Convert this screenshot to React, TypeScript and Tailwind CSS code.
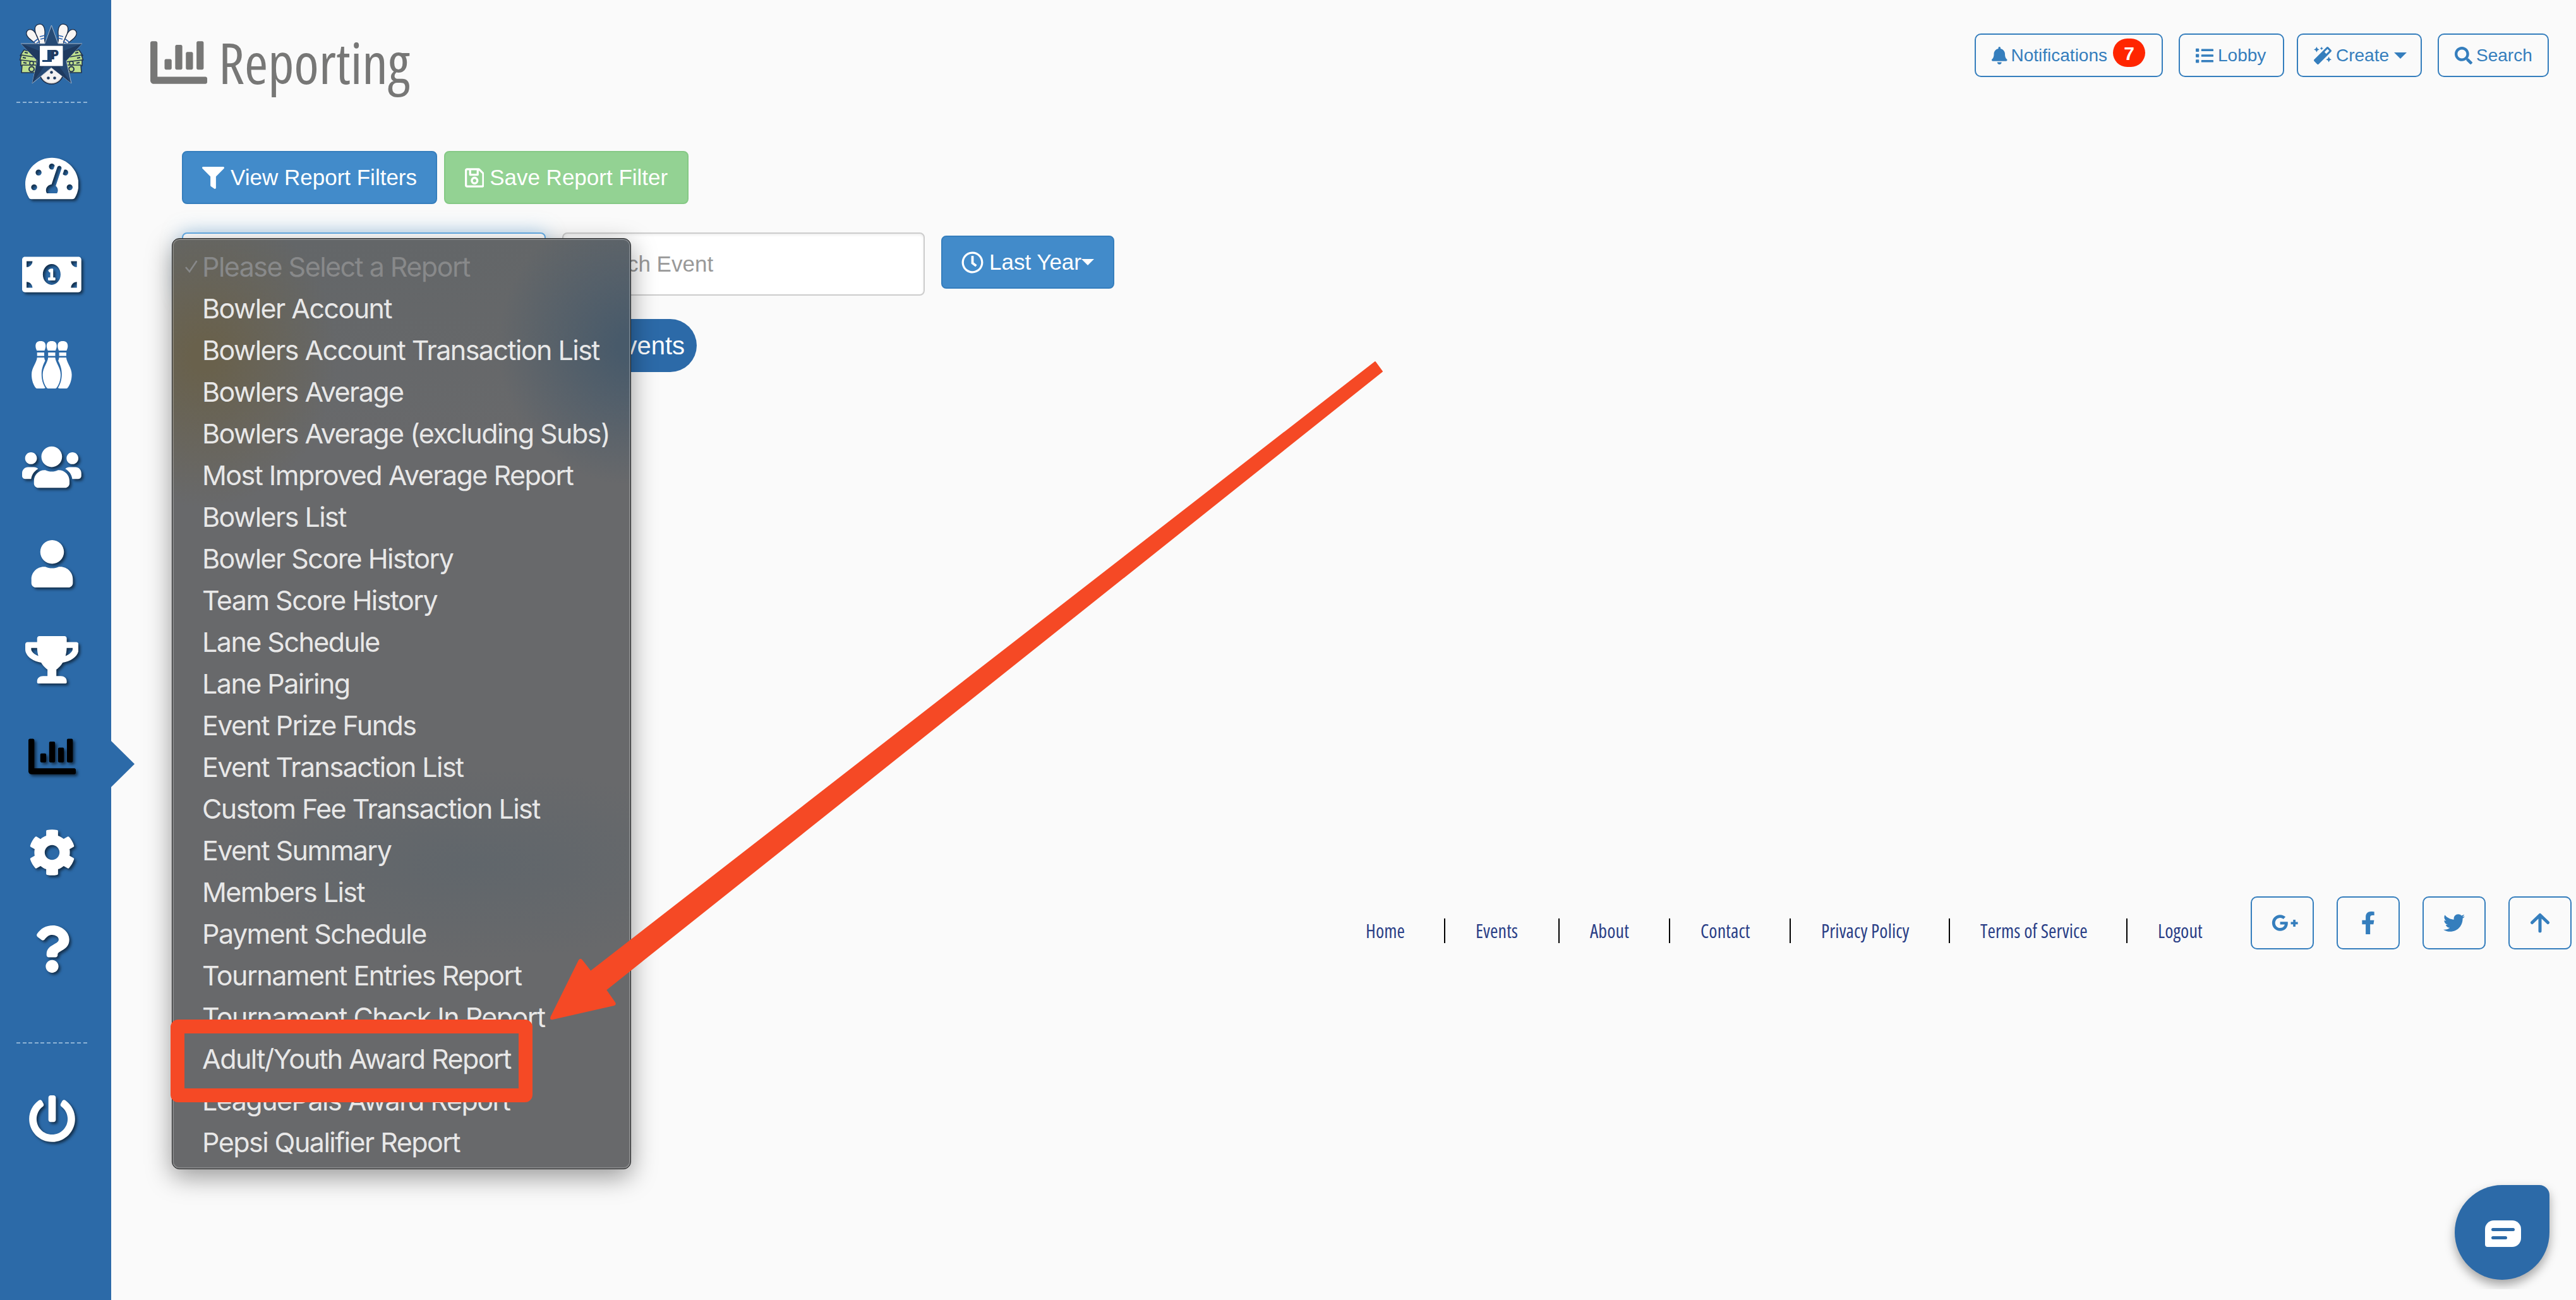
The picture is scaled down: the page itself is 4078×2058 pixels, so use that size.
import type { ReactNode } from "react"
import {
  FaBell, FaChartBar, FaCog, FaFacebookF, FaFilter, FaGooglePlusG, FaList, FaMagic,
  FaMoneyBillAlt, FaPowerOff, FaQuestion, FaRegClock, FaRegSave, FaSearch,
  FaTachometerAlt, FaTrophy, FaTwitter, FaUser, FaUsers,
} from "react-icons/fa"

const REPORTS = [
  "Bowler Account",
  "Bowlers Account Transaction List",
  "Bowlers Average",
  "Bowlers Average (excluding Subs)",
  "Most Improved Average Report",
  "Bowlers List",
  "Bowler Score History",
  "Team Score History",
  "Lane Schedule",
  "Lane Pairing",
  "Event Prize Funds",
  "Event Transaction List",
  "Custom Fee Transaction List",
  "Event Summary",
  "Members List",
  "Payment Schedule",
  "Tournament Entries Report",
  "Tournament Check In Report",
  "Adult/Youth Award Report",
  "LeaguePals Award Report",
  "Pepsi Qualifier Report",
]

const FOOTER_LINKS = ["Home", "Events", "About", "Contact", "Privacy Policy", "Terms of Service", "Logout"]

function LogoSide() {
  return (
    <>
      {/* cash stack */}
      <g fill="#bfe08d" stroke="#22344f" strokeWidth="1.600" strokeLinejoin="round">
        <path d="M6 41 L26 46 L26 56 L0 50 Z" />
        <path d="M2 49 L26 53 L26 64 L-0.500 57 Z" />
        <path d="M1 57 L26 60 L26 70 L1 66 Z" />
        <path d="M3 65 L25 65 L25 77 L2 77 Z" />
      </g>
      <path d="M7 45 L12 46 M4 53 L9 54 M5 61 L10 62" stroke="#22344f" strokeWidth="2" />
      <circle cx="18" cy="71.500" r="4" fill="none" stroke="#22344f" strokeWidth="2" />
      <circle cx="18" cy="62" r="3" fill="none" stroke="#22344f" strokeWidth="1.600" />
      {/* pins */}
      <g stroke="#1c2b45" strokeWidth="1.300" fill="#f8f5f4">
        <path transform="translate(9.500 17) rotate(-38)" d="M0 7 C-1 -1 3 -4 6.500 -4 C10 -4 14 -1 13 7 C12.500 12 10 14 10.500 24 L2.500 24 C3 14 0.500 12 0 7 Z" />
        <path transform="translate(23 7) rotate(-10)" d="M0 7 C-1 -3 3.500 -5.500 7.500 -5.500 C11.500 -5.500 16 -3 15 7 C14.500 13 11.500 16 12 29 L3.500 29 C4 16 0.500 13 0 7 Z" />
      </g>
      <path d="M31 20 L39 18 M32 24 L40 22 M21 29 L28 23.500 M24 32 L31 27" stroke="#2b62ae" strokeWidth="1.700" />
    </>
  )
}

function Logo() {
  return (
    <svg className="overflow-visible" width="100" height="97" viewBox="0 0 100 97">
      <LogoSide />
      <g transform="translate(99 0) scale(-1 1)">
        <LogoSide />
      </g>
      <circle cx="49.500" cy="76" r="19" fill="#dcd8d6" stroke="#1c2b45" strokeWidth="1.500" />
      <path d="M49.500 70 L66 82 A18 18 0 0 1 33 82 Z" fill="#f4f2f1" />
      <path
        d="M49.500 2 L60 31 L98 31 L73 58 L81 94 L49.500 69 L19 94 L27 58 L1 31 L39 31 Z"
        fill="#264a75"
        stroke="#a9b9cc"
        strokeWidth="1"
      />
      <path
        d="M49.500 50 L98 31 L73 58 Z M49.500 50 L81 94 L49.500 69 Z M49.500 50 L19 94 L27 58 Z M49.500 50 L1 31 L27 58 Z"
        fill="#1f3a5f"
      />
      <g fill="#1f3a5f">
        <circle cx="49.500" cy="76.500" r="2.300" />
        <circle cx="44.500" cy="85.500" r="2.300" />
        <circle cx="54.500" cy="85.500" r="2.300" />
      </g>
      <rect x="30.500" y="34" width="37.500" height="33" rx="1.500" fill="#fff" stroke="#1c3a63" strokeWidth="1" />
      <path d="M43 41 H50 V60 H35 V57 H43 Z" fill="#1f4470" />
      <text x="48" y="56" fill="#1f3a5f" fontFamily="'Open Sans', sans-serif" fontWeight="800" fontSize="21">
        P
      </text>
    </svg>
  )
}

function Pin() {
  return (
    <>
      <path d="M6.300 8 C6.300 2.500 9 0 14.300 0 S22.300 2.500 22.300 8 C22.300 11 21 13 20.500 15 H8.200 C7.600 13 6.300 11 6.300 8 Z" />
      <path d="M8.700 18 H20 V23.500 H8.700 Z" />
    </>
  )
}

function SidePin() {
  return (
    <>
      <Pin />
      <path d="M8.700 26 H20 Q20.300 28.500 21.500 31 C18 38 15.800 44 15.800 52 C15.800 61 18 68 21.800 74 Q21 75 18.500 75 H10 Q8 75 7 74.500 C3 70 0 62 0 53 C0 42 8.200 34 8.700 26 Z" />
    </>
  )
}

function PinsIcon() {
  return (
    <svg width="64" height="75" viewBox="0 0 64 75" fill="currentColor">
      <SidePin />
      <g transform="translate(63.600 0) scale(-1 1)">
        <SidePin />
      </g>
      <g transform="translate(17.500 0)">
        <Pin />
      </g>
      <path d="M26.200 26 H37.400 C38 34 46 42 46 53 C46 62 43 70 39 74.500 Q38 75 36 75 H27.600 Q25.600 75 24.600 74.500 C20.600 70 17.600 62 17.600 53 C17.600 42 25.600 34 26.200 26 Z" />
    </svg>
  )
}

function ArrowUpIcon() {
  return (
    <svg width="32" height="32" viewBox="0 0 32 32" fill="none" stroke="currentColor" strokeWidth="5" strokeLinecap="round" strokeLinejoin="round">
      <path d="M16 29 V4 M3.500 15.500 L16 3.500 L28.500 15.500" />
    </svg>
  )
}

// wide glyphs need an explicit width, the icon svgs are square by default
const NAV: { id: string; icon: ReactNode; active?: boolean; flat?: boolean }[] = [
  { id: "dashboard", icon: <FaTachometerAlt className="w-[1.125em]" /> },
  { id: "money", icon: <FaMoneyBillAlt className="w-[1.25em]" /> },
  { id: "bowling", icon: <PinsIcon />, flat: true },
  { id: "teams", icon: <FaUsers className="w-[1.25em]" /> },
  { id: "user", icon: <FaUser /> },
  { id: "trophy", icon: <FaTrophy className="w-[1.125em]" /> },
  { id: "reports", icon: <FaChartBar />, active: true },
  { id: "settings", icon: <FaCog /> },
  { id: "help", icon: <FaQuestion /> },
]

const ICON_SHADOW = "drop-shadow-[3px_3px_2px_rgba(0,0,0,0.55)]"

function DashedRule() {
  return <div className="h-[2px] w-28 bg-[repeating-linear-gradient(90deg,#8db2d5_0_6px,transparent_6px_9.6px)]" />
}

function Sidebar() {
  return (
    <aside className="h-full w-[176px] shrink-0 bg-[#2c6aa8] text-[75px] text-white">
      <div className="flex w-[164px] flex-col items-center pt-[38px]">
        <Logo />
        <div className="mt-[26px]">
          <DashedRule />
        </div>
        <nav className="mt-[43px] flex w-full flex-col">
          {NAV.map((n) => (
            <div key={n.id} className="relative flex h-[152.5px] items-center justify-center">
              {n.flat ? (
                <div className="mb-[19px]">{n.icon}</div>
              ) : (
                <div className={n.active ? `text-black ${ICON_SHADOW}` : ICON_SHADOW}>{n.icon}</div>
              )}
              {n.active && (
                <div className="absolute top-[52px] -right-[49px] h-[73px] w-[37px] bg-[#2c6aa8] [clip-path:polygon(0_0,100%_50%,0_100%)]" />
              )}
            </div>
          ))}
        </nav>
        <div className="mt-[71px] mb-[82px]">
          <DashedRule />
        </div>
        <div className={ICON_SHADOW}>
          <FaPowerOff />
        </div>
      </div>
    </aside>
  )
}

function Caret() {
  return <span className="h-0 w-0 border-x-10 border-t-10 border-x-transparent border-t-current" />
}

const OUTLINE = "flex h-[69px] items-center rounded-[10px] border-2 border-[#357ebd] pl-[25px] text-[28px] text-[#357ebd]"

function TopButtons() {
  return (
    <div className="mt-[53px] mr-[43px] flex items-start">
      <div className={`${OUTLINE} w-[298px]`}>
        <FaBell className="w-[0.875em]" />
        <span className="ml-[6px]">Notifications</span>
        <span className="mb-2 ml-[9px] flex h-[45px] w-[51px] items-center justify-center rounded-[25px] bg-[#ff2600] pt-[2px] text-[30px] font-bold text-white">
          7
        </span>
      </div>
      <div className={`${OUTLINE} ml-[25px] w-[167px]`}>
        <FaList />
        <span className="ml-[7px]">Lobby</span>
      </div>
      <div className={`${OUTLINE} ml-[20px] w-[198px]`}>
        <FaMagic />
        <span className="mr-2 ml-[7px]">Create</span>
        <Caret />
      </div>
      <div className={`${OUTLINE} ml-[25px] w-[176px]`}>
        <FaSearch />
        <span className="ml-[6px]">Search</span>
      </div>
    </div>
  )
}

function ReportMenu() {
  return (
    <div className="absolute top-[7px] -left-[18px] z-10 h-[1474px] w-[727px] rounded-[12px] border border-[#1e1f20] bg-[#68696b] bg-[radial-gradient(ellipse_210px_240px_at_50px_185px,#69614c_10%,transparent),radial-gradient(ellipse_210px_220px_at_725px_170px,#485a6a_10%,transparent),radial-gradient(ellipse_420px_150px_at_480px_990px,#60666b,transparent),linear-gradient(#636668_0,#68696b_320px)] pt-[11px] pl-[47px] font-['Inter',sans-serif] text-[43px] leading-[66px] tracking-[-1.54px] text-[#e8e8e8] shadow-[inset_0_0_0_2px_rgba(255,255,255,0.2),0_12px_40px_rgba(0,0,0,0.4)]">
      <div className="relative whitespace-nowrap text-[#88898a]">
        <svg className="absolute top-[23px] -left-[27px]" width="20" height="20" viewBox="0 0 20 20" fill="none" stroke="currentColor" strokeWidth="2.600">
          <path d="M1 11 L7 18 L18.500 1" />
        </svg>
        Please Select a Report
      </div>
      {REPORTS.map((r) => (
        <div key={r} className="whitespace-nowrap">{r}</div>
      ))}
    </div>
  )
}

function Footer() {
  return (
    <footer className="mt-[830px] flex pl-[1984px]">
      <ul className="mt-[35px] grid h-[39px] grid-cols-[128px_181px_175px_191px_252px_281px_195px] font-['Open_Sans',sans-serif] text-[30px] leading-[39px] tracking-[0.1px] text-[#2a3f87] font-stretch-condensed">
        {FOOTER_LINKS.map((l) => (
          <li key={l} className="border-r-2 border-black pl-[48px] whitespace-nowrap first:pl-[2px] last:border-0">
            {l}
          </li>
        ))}
      </ul>
      <div className="flex gap-9 text-[34px] text-[#357ebd]">
        {[
          <FaGooglePlusG key="g" className="ml-[9px] w-[1.25em]" />,
          <FaFacebookF key="f" className="h-9" />,
          <FaTwitter key="t" />,
          <ArrowUpIcon key="u" />,
        ].map((icon, i) => (
          <div key={i} className="flex h-[84px] w-[100px] items-center justify-center rounded-[10px] border-2 border-[#357ebd]">
            {icon}
          </div>
        ))}
      </div>
    </footer>
  )
}

function ChatBubble() {
  return (
    <div className="absolute right-[12px] bottom-[17px] overflow-hidden px-[30px] pt-[30px] pb-[15px]">
      <div className="flex h-[150px] w-[150px] items-center justify-center rounded-[75px] rounded-tr-[16px] bg-[#2c6aa8] pt-[4px] pl-[3px] shadow-[0_8px_16px_rgba(0,0,0,0.35)]">
        <div className="flex h-[42px] w-[57px] flex-col gap-2 rounded-[14px] rounded-bl-[4px] bg-white pt-3 pl-[10px]">
          <div className="h-[5px] w-[37px] rounded-full bg-[#2c6aa8]" />
          <div className="h-[5px] w-[25px] rounded-full bg-[#2c6aa8]" />
        </div>
      </div>
    </div>
  )
}

export default function App() {
  return (
    <div className="relative flex h-[2058px] w-[4078px] overflow-hidden bg-[#fafafa] font-['Liberation_Sans',Arial,sans-serif] [&_svg]:shrink-0">
      <Sidebar />
      <main className="flex-1">
        <header className="flex h-[239px] items-start justify-between">
          <h1 className="mt-[53px] ml-[62px] flex items-center gap-[18px] font-['Open_Sans',sans-serif] text-[90px] leading-[90px] text-[#777776] font-stretch-condensed">
            <FaChartBar />
            <span className="mb-[2px]">Reporting</span>
          </h1>
          <TopButtons />
        </header>

        <div className="pl-28 text-[35px]">
          <div className="flex gap-[10.5px] text-white">
            <button className="flex h-[84px] w-[404px] items-center rounded-lg border-2 border-[#357ebd] bg-[#428bca] pl-[30px]">
              <FaFilter />
              <span className="ml-[10px]">View Report Filters</span>
            </button>
            <button className="flex h-[84px] w-[387px] items-center rounded-lg border-2 border-[#85c985] bg-[#93d293] pl-[31px]">
              <FaRegSave className="w-[0.875em]" />
              <span className="ml-[9px]">Save Report Filter</span>
            </button>
          </div>

          <div className="mt-[45px] flex items-start gap-[26px]">
            <div className="relative h-[100px] w-[576px] rounded-lg border-2 border-[#66afe9] bg-white shadow-[0_0_30px_rgba(102,175,233,0.5)]">
              <ReportMenu />
            </div>
            <div className="flex h-[100px] w-[574px] items-center rounded-lg border-2 border-[#ccc] bg-white pl-[27px] text-[#999] shadow-[inset_0_2px_4px_rgba(0,0,0,0.075)]">
              Search Event
            </div>
            <button className="mt-[5px] flex h-[84px] w-[274px] items-center rounded-lg border-2 border-[#357ebd] bg-[#428bca] pl-[30px] text-white">
              <FaRegClock />
              <span className="ml-[9px]">Last Year</span>
              <Caret />
            </button>
          </div>

          <div className="mt-[37px] ml-[572px] flex h-[84px] w-[243px] items-center justify-end rounded-[42px] bg-[#2c6aa8] pr-[19px] text-[40px] text-white">
            Events
          </div>
        </div>

        <Footer />
      </main>

      <div className="absolute top-[1614px] left-[270px] z-20 h-[131px] w-[573px] rounded-[12px] border-22 border-[#f54925]" />
      <svg className="absolute top-[560px] left-[860px] z-20" width="1340" height="1065" viewBox="860 560 1340 1065">
        <path
          d="M2177 573 L2188 588 L959 1567 L973 1587 Q975 1590 972 1591 L875 1613 Q871 1614 872.500 1610 L917 1520 Q919 1517.500 921 1520 L935 1538 Z"
          fill="#f54925"
          stroke="#f54925"
          strokeWidth="2"
          strokeLinejoin="round"
        />
      </svg>
      <ChatBubble />
    </div>
  )
}
